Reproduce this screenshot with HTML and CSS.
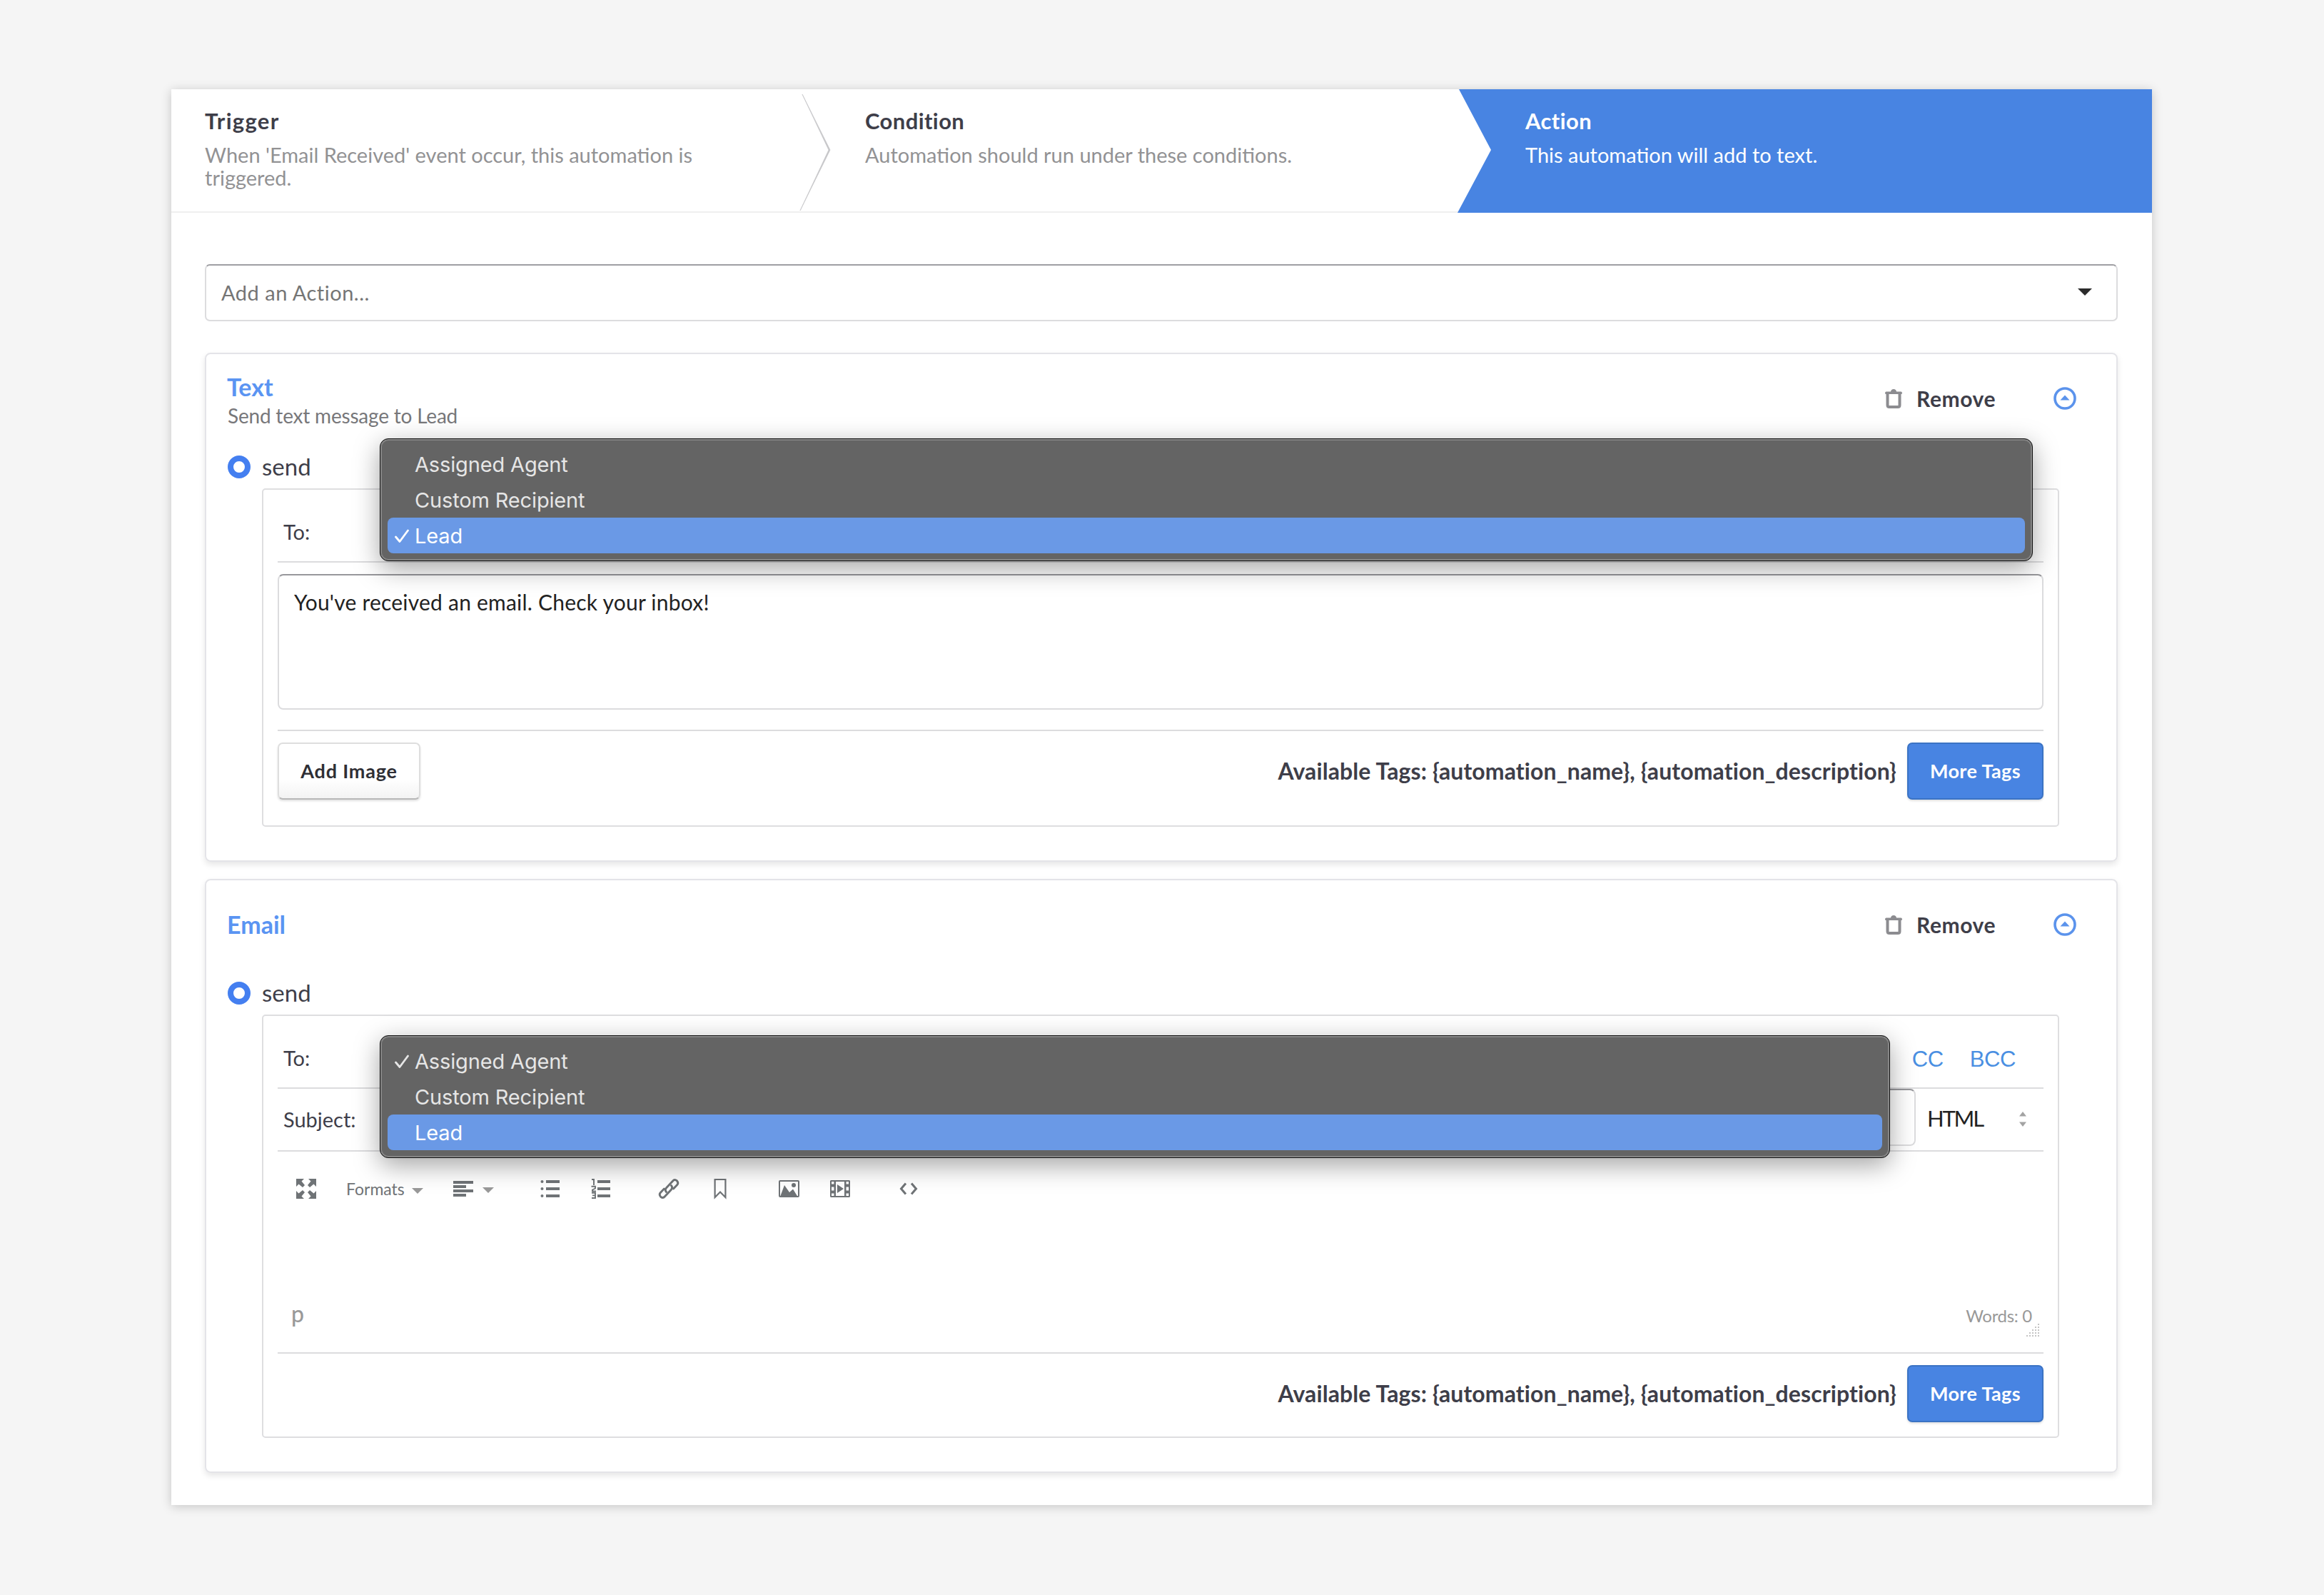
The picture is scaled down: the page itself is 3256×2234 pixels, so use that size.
FILE: index.html
```html
<!DOCTYPE html>
<html lang="en">
<head>
    <meta charset="UTF-8">
    <meta name="viewport" content="width=device-width, initial-scale=1.0">
    <title>Automation - Action</title>
    <link rel="stylesheet" href="styles.css">
</head>
<body>
    <div class="panel">
        <div class="steps">
            <div class="step">
                <div class="step-title trigger">Trigger</div>
                <div class="step-text">When 'Email Received' event occur, this automation is triggered.</div>
                <svg class="step-arrow" viewBox="0 0 44 173"><path d="M4 7 L43 85 L1 170 L41 85 Z" fill="#c4c4c6" stroke="#c9c9cb" stroke-width="0.8"/></svg>
            </div>
            <div class="step">
                <div class="step-title">Condition</div>
                <div class="step-text">Automation should run under these conditions.</div>
            </div>
            <div class="step active">
                <svg class="step-notch" viewBox="0 0 49 173"><path d="M2 0 H49 V173 H0 L47 85 Z" fill="#4884e2"/></svg>
                <div class="step-title">Action</div>
                <div class="step-text">This automation will add to text.</div>
            </div>
        </div>

        <div class="panel-body">
            <div class="action-select">
                <span>Add an Action...</span>
                <svg width="20" height="10" viewBox="0 0 20 10"><path d="M0 0 H20 L10 10 Z" fill="#2b2b2b"/></svg>
            </div>

            <div class="card">
                <div class="card-head">
                    <div class="card-heading with-sub">
                        <div class="card-title">Text</div>
                        <div class="card-sub">Send text message to Lead</div>
                    </div>
                    <div class="card-tools">
                        <svg class="trash" viewBox="0 0 24 28"><path d="M3.500 6 V23.500 Q3.500 26 6 26 H18 Q20.500 26 20.500 23.500 V6" fill="none" stroke="#8c8c90" stroke-width="4"/><path d="M1.500 4.500 H8 Q8.500 1 12 1 Q15.500 1 16 4.500 H22.500 Q24 5 24 6.500 Q24 8 22.500 8 H1.500 Q0 8 0 6.500 Q0 5 1.500 4.500 Z" fill="#8c8c90"/></svg>
                        <span class="remove">Remove</span>
                        <svg class="collapse" viewBox="0 0 32 32"><circle cx="16" cy="16" r="14" fill="none" stroke="#5b93ec" stroke-width="3.600"/><path d="M16 11.500 L22.500 18.500 H9.500 Z" fill="#5b93ec"/></svg>
                    </div>
                </div>
                <div class="send-row"><span class="radio"></span><span class="send">send</span></div>
                <div class="box">
                    <div class="row to-row">
                        <span class="label">To:</span>
                        <div class="menu menu-text">
                            <div class="menu-item">Assigned Agent</div>
                            <div class="menu-item">Custom Recipient</div>
                            <div class="menu-item selected"><svg class="check" viewBox="0 0 20 20"><path d="M1.500 11 L7 17.500 L18.500 2" fill="none" stroke="currentColor" stroke-width="2.800" stroke-linecap="round" stroke-linejoin="round"/></svg>Lead</div>
                        </div>
                    </div>
                    <div class="message">You've received an email. Check your inbox!</div>
                    <div class="box-foot">
                        <button class="btn">Add Image</button>
                        <span class="tags">Available Tags: {automation_name}, {automation_description}</span>
                        <button class="btn btn-primary">More Tags</button>
                    </div>
                </div>
            </div>

            <div class="card card-email">
                <div class="card-head">
                    <div class="card-heading">
                        <div class="card-title">Email</div>
                    </div>
                    <div class="card-tools">
                        <svg class="trash" viewBox="0 0 24 28"><path d="M3.500 6 V23.500 Q3.500 26 6 26 H18 Q20.500 26 20.500 23.500 V6" fill="none" stroke="#8c8c90" stroke-width="4"/><path d="M1.500 4.500 H8 Q8.500 1 12 1 Q15.500 1 16 4.500 H22.500 Q24 5 24 6.500 Q24 8 22.500 8 H1.500 Q0 8 0 6.500 Q0 5 1.500 4.500 Z" fill="#8c8c90"/></svg>
                        <span class="remove">Remove</span>
                        <svg class="collapse" viewBox="0 0 32 32"><circle cx="16" cy="16" r="14" fill="none" stroke="#5b93ec" stroke-width="3.600"/><path d="M16 11.500 L22.500 18.500 H9.500 Z" fill="#5b93ec"/></svg>
                    </div>
                </div>
                <div class="send-row"><span class="radio"></span><span class="send">send</span></div>
                <div class="box">
                    <div class="row to-row">
                        <span class="label">To:</span>
                        <div class="copy-links"><a>CC</a><a>BCC</a></div>
                        <div class="menu menu-email">
                            <div class="menu-item"><svg class="check" viewBox="0 0 20 20"><path d="M1.500 11 L7 17.500 L18.500 2" fill="none" stroke="currentColor" stroke-width="2.800" stroke-linecap="round" stroke-linejoin="round"/></svg>Assigned Agent</div>
                            <div class="menu-item">Custom Recipient</div>
                            <div class="menu-item selected">Lead</div>
                        </div>
                    </div>
                    <div class="row subject-row">
                        <span class="label">Subject:</span>
                        <div class="subject-input"></div>
                        <div class="format-select">
                            <span>HTML</span>
                            <svg width="10" height="22" viewBox="0 0 10 22"><path d="M5 0 L10 6.500 H0 Z M0 14.500 H10 L5 21 Z" fill="#a3a3a3"/></svg>
                        </div>
                    </div>
                    <div class="editor">
                        <div class="toolbar">
                            <svg class="icon i-full" viewBox="0 0 32 32"><path d="M2 2 H13 L9.500 5.500 L14 11 L11 14 L5.500 9.500 L2 13 Z M30 2 V13 L26.500 9.500 L21 14 L18 11 L22.500 5.500 L19 2 Z M2 30 V19 L5.500 22.500 L11 18 L14 21 L9.500 26.500 L13 30 Z M30 30 H19 L22.500 26.500 L18 21 L21 18 L26.500 22.500 L30 19 Z"/></svg>
                            <span class="formats">Formats</span>
                            <svg class="caret" viewBox="0 0 16 8"><path d="M0 0 H16 L8 8 Z"/></svg>
                            <svg class="icon i-align" viewBox="0 0 32 32"><path d="M2 5 H30 V9 H2 Z M2 11 H20 V15 H2 Z M2 17 H30 V21 H2 Z M2 23 H20 V27 H2 Z"/></svg>
                            <svg class="caret caret-align" viewBox="0 0 16 8"><path d="M0 0 H16 L8 8 Z"/></svg>
                            <svg class="icon i-ul" viewBox="0 0 32 32"><path d="M10 4 H29 V8 H10 Z M10 14 H29 V18 H10 Z M10 24 H29 V28 H10 Z"/><circle cx="4.500" cy="6" r="2"/><circle cx="4.500" cy="16" r="2"/><circle cx="4.500" cy="26" r="2"/></svg>
                            <svg class="icon i-ol" viewBox="0 0 32 32"><path d="M11 4 H29 V8 H11 Z M11 14 H29 V18 H11 Z M11 24 H29 V28 H11 Z"/><path d="M3 3 H6 V11 M2.500 12.800 H8 V15.500 L4 17.500 V19.500 H9 M3 21.800 H8 V29 H3 M4 25.400 H8" fill="none" stroke="#6f7376" stroke-width="1.900"/></svg>
                            <svg class="icon i-link" viewBox="0 0 32 32"><g fill="none" stroke="#6f7376" stroke-width="2.900" stroke-linecap="round"><path d="M12.500 20.500 Q10 17.500 12.800 14.500 L21.500 5.200 Q24 2.200 27.300 4.700 Q30.200 8 27.500 10.800 L22.500 16"/><path d="M19.500 11.500 Q22 14.500 19.200 17.500 L10.500 26.800 Q8 29.800 4.700 27.300 Q1.800 24 4.500 21.200 L9.500 16"/></g></svg>
                            <svg class="icon i-mark" viewBox="0 0 32 32"><path d="M8.600 3 H23.400 V28 L16 20.500 L8.600 28 Z" fill="none" stroke="#6f7376" stroke-width="2.200"/></svg>
                            <svg class="icon i-img" viewBox="0 0 32 32"><rect x="3" y="5" width="27" height="22" rx="1" fill="none" stroke="#6f7376" stroke-width="2"/><circle cx="23" cy="11" r="3"/><path d="M4 27 L10 11 L17 21 L22 16.500 L28.500 27 Z"/></svg>
                            <svg class="icon i-media" viewBox="0 0 32 32"><path fill-rule="evenodd" d="M3 4 H29 L30 5 V27 L29 28 H3 L2 27 V5 Z M4 6 V9.500 H7.500 V6 Z M4 13.500 V18.500 H7.500 V13.500 Z M4 22.500 V26 H7.500 V22.500 Z M24.500 6 V9.500 H28 V6 Z M24.500 13.500 V18.500 H28 V13.500 Z M24.500 22.500 V26 H28 V22.500 Z M10 6 V26 H22 V6 Z"/><path d="M12 10 L21 16 L12 22 Z"/></svg>
                            <svg class="icon i-code" viewBox="0 0 32 32"><path d="M12 8.500 L5.500 16 L12 23.500 M20 8.500 L26.500 16 L20 23.500" fill="none" stroke="#6f7376" stroke-width="3"/></svg>
                        </div>
                        <div class="status">
                            <span class="path">p</span>
                            <span class="words">Words: 0</span>
                        </div>
                        <svg class="grip" viewBox="0 0 18 18"><path d="M16 0h2v2h-2z M12 4h2v2h-2z M16 4h2v2h-2z M8 8h2v2h-2z M12 8h2v2h-2z M16 8h2v2h-2z M4 12h2v2h-2z M8 12h2v2h-2z M12 12h2v2h-2z M16 12h2v2h-2z M0 16h2v2h-2z M4 16h2v2h-2z M8 16h2v2h-2z M12 16h2v2h-2z M16 16h2v2h-2z" fill="#c4c4c4"/></svg>
                    </div>
                    <div class="box-foot">
                        <span class="tags">Available Tags: {automation_name}, {automation_description}</span>
                        <button class="btn btn-primary">More Tags</button>
                    </div>
                </div>
            </div>
        </div>
    </div>
</body>
</html>
```

FILE: styles.css
```css
* {
    box-sizing: border-box;
}

body {
    margin: 0;
    padding: 125px 241px 126px 240px;
    height: 2234px;
    background: #f5f5f5;
    color: #3e3e49;
    font-family: Lato, "Liberation Sans", sans-serif;
    font-size: 29px;
}

svg {
    display: block;
    flex-shrink: 0;
}

.panel {
    height: 1983px;
    background: #fff;
    box-shadow: 0 2px 14px rgba(0, 0, 0, 0.2);
}

/* steps */
.steps {
    display: grid;
    grid-template-columns: repeat(3, 1fr);
    height: 173px;
}

.step {
    position: relative;
    padding: 26px 90px 0 47px;
    border-bottom: 2px solid #efefef;
}

.step-title {
    font-size: 31px;
    line-height: 36px;
    font-weight: bold;
    letter-spacing: 0.4px;
}

.step-title.trigger {
    letter-spacing: 1.3px;
}

.step-text {
    margin-top: 14px;
    font-size: 29px;
    line-height: 32px;
    color: #929294;
}

.step.active {
    background: #4884e2;
    border-color: #4884e2;
    color: #fff;
}

.step.active .step-text {
    color: #fff;
}

.step-arrow {
    position: absolute;
    right: 1px;
    top: 0;
    width: 44px;
    height: 173px;
}

.step-notch {
    position: absolute;
    left: -48px;
    top: 0;
    width: 49px;
    height: 173px;
}

.panel-body {
    padding: 72px 48px 45px 47px;
}

.action-select {
    display: flex;
    align-items: center;
    justify-content: space-between;
    height: 80px;
    padding: 0 34px 2px 21px;
    border: 2px solid #dcdcde;
    border-top-color: #9f9fa3;
    border-radius: 7px;
    letter-spacing: 0.5px;
    color: #757575;
}

/* cards */
.card {
    height: 713px;
    margin-top: 44px;
    padding: 0 30px;
    border: 2px solid #e4e4e8;
    border-radius: 8px;
    box-shadow: 0 4px 8px rgba(0, 0, 0, 0.1);
}

.card-email {
    height: 832px;
    margin-top: 24px;
}

.card-head {
    display: flex;
    align-items: center;
    justify-content: space-between;
    height: 124px;
}

.card-heading.with-sub {
    padding-top: 5px;
}

.card-title {
    margin-left: -1px;
    font-size: 34px;
    line-height: 38px;
    font-weight: bold;
    color: #5a94f2;
}

.card-sub {
    margin-top: 5px;
    font-size: 28px;
    line-height: 32px;
    letter-spacing: -0.2px;
    color: #77777a;
}

.card-tools {
    display: flex;
    align-items: center;
    margin-right: 26px;
}

.trash {
    width: 24px;
    height: 28px;
}

.remove {
    width: 112px;
    margin: 0 80px 0 20px;
    font-size: 30px;
    line-height: 32px;
    font-weight: bold;
    letter-spacing: 0.6px;
}

.collapse {
    width: 32px;
    height: 32px;
}

.send-row {
    display: flex;
    align-items: center;
    height: 32px;
    margin-top: 18px;
}

.radio {
    width: 32px;
    height: 32px;
    margin-right: 16px;
    border: 8px solid #447ff0;
    border-radius: 50%;
}

.send {
    padding-bottom: 3px;
    font-size: 33px;
    line-height: 32px;
}

.box {
    margin: 14px 50px 0 48px;
    padding: 0 20px;
    border: 2px solid #dedee0;
    border-radius: 5px;
}

.row {
    position: relative;
    display: flex;
    align-items: center;
    border-bottom: 2px solid #dcdcde;
}

.to-row {
    height: 102px;
    padding-top: 17px;
}

.label {
    padding-left: 8px;
}

.message {
    height: 190px;
    margin: 16px 0 28px;
    padding: 17px 21px;
    border: 2px solid #dcdcde;
    border-top-color: #98989c;
    border-radius: 8px;
    font-size: 30px;
    line-height: 40px;
    letter-spacing: 0.22px;
    color: #222;
}

.box-foot {
    display: flex;
    align-items: center;
    padding: 16px 0 36px;
    border-top: 2px solid #dcdcde;
}

.card-email .box-foot {
    padding-bottom: 20px;
}

.btn {
    height: 80px;
    width: 200px;
    padding: 0 0 2px;
    border: 2px solid #dedede;
    border-bottom-color: #b8b8b8;
    border-radius: 7px;
    background: linear-gradient(#fff 65%, #f3f3f3);
    box-shadow: 0 2px 3px rgba(0, 0, 0, 0.12);
    color: #2f2f35;
    font-family: inherit;
    font-size: 27px;
    font-weight: bold;
    letter-spacing: 0.8px;
}

.btn-primary {
    width: 191px;
    border-color: #3b73c4;
    background: #4884e2;
    color: #fff;
    letter-spacing: 0.4px;
}

.tags {
    margin: 0 15px 0 auto;
    padding-bottom: 1px;
    font-size: 32px;
    font-weight: bold;
    letter-spacing: 0.1px;
    white-space: nowrap;
}

/* recipient dropdowns */
.menu {
    position: absolute;
    z-index: 2;
    left: 143px;
    height: 172px;
    padding: 10px;
    border: 1px solid #111;
    border-radius: 12px;
    background: #646464;
    box-shadow: inset 0 0 0 2px #858585, 0 10px 36px rgba(0, 0, 0, 0.36);
    font-family: Inter, sans-serif;
    font-size: 29px;
    letter-spacing: -0.15px;
    color: #e6e6e6;
}

.menu-text {
    top: -72px;
    width: 2316px;
}

.menu-email {
    top: 27px;
    width: 2116px;
}

.menu-item {
    position: relative;
    height: 50px;
    padding-left: 38px;
    border-radius: 8px;
    line-height: 51px;
}

.menu-item.selected {
    background: #6a99e6;
    color: #fff;
}

.check {
    position: absolute;
    left: 10px;
    top: 16px;
    width: 20px;
    height: 20px;
}

.copy-links {
    display: flex;
    gap: 37px;
    margin: 4px 39px 0 auto;
    font-family: "Liberation Sans", sans-serif;
    font-size: 31px;
    letter-spacing: -0.4px;
    color: #4a8fe2;
}

.subject-row {
    height: 88px;
}

.subject-row .label {
    padding-bottom: 2px;
}

.subject-input {
    align-self: flex-start;
    flex-grow: 1;
    height: 80px;
    margin-left: 36px;
    border: 2px solid #dcdcde;
    border-top-color: #98989c;
    border-radius: 8px;
}

.format-select {
    display: flex;
    align-items: center;
    justify-content: space-between;
    width: 139px;
    margin: 0 24px 0 16px;
    font-size: 31px;
    letter-spacing: -2.2px;
    color: #222;
}

.format-select span {
    padding-bottom: 5px;
}

/* editor */
.editor {
    position: relative;
    display: flex;
    flex-direction: column;
    justify-content: space-between;
    height: 281px;
    padding: 36px 16px 36px 19px;
}

.toolbar {
    display: flex;
    align-items: center;
    height: 32px;
    fill: #6f7376;
}

.icon {
    width: 32px;
    height: 32px;
}

.i-full {
    margin-left: 5px;
}

.formats {
    width: 82px;
    margin: 0 10px 0 40px;
    font-size: 23px;
    line-height: 32px;
    color: #6f7376;
}

.caret {
    width: 16px;
    height: 8px;
    margin-top: 6px;
    fill: #999;
}

.i-align {
    margin: 0 11px 0 40px;
}

.caret-align {
    margin-top: 4px;
}

.i-ul {
    margin-left: 63px;
}

.i-ol {
    margin-left: 39px;
}

.i-link {
    margin-left: 63px;
}

.i-mark {
    margin-left: 40px;
}

.i-img {
    margin-left: 64px;
}

.i-media {
    margin-left: 40px;
}

.i-code {
    margin-left: 64px;
}

.status {
    display: flex;
    align-items: baseline;
    justify-content: space-between;
    color: #999;
}

.path {
    font-size: 32px;
    line-height: 36px;
    font-weight: 500;
}

.words {
    font-size: 24px;
    letter-spacing: -0.3px;
}

.grip {
    position: absolute;
    right: 6px;
    bottom: 22px;
    width: 18px;
    height: 18px;
}
```
